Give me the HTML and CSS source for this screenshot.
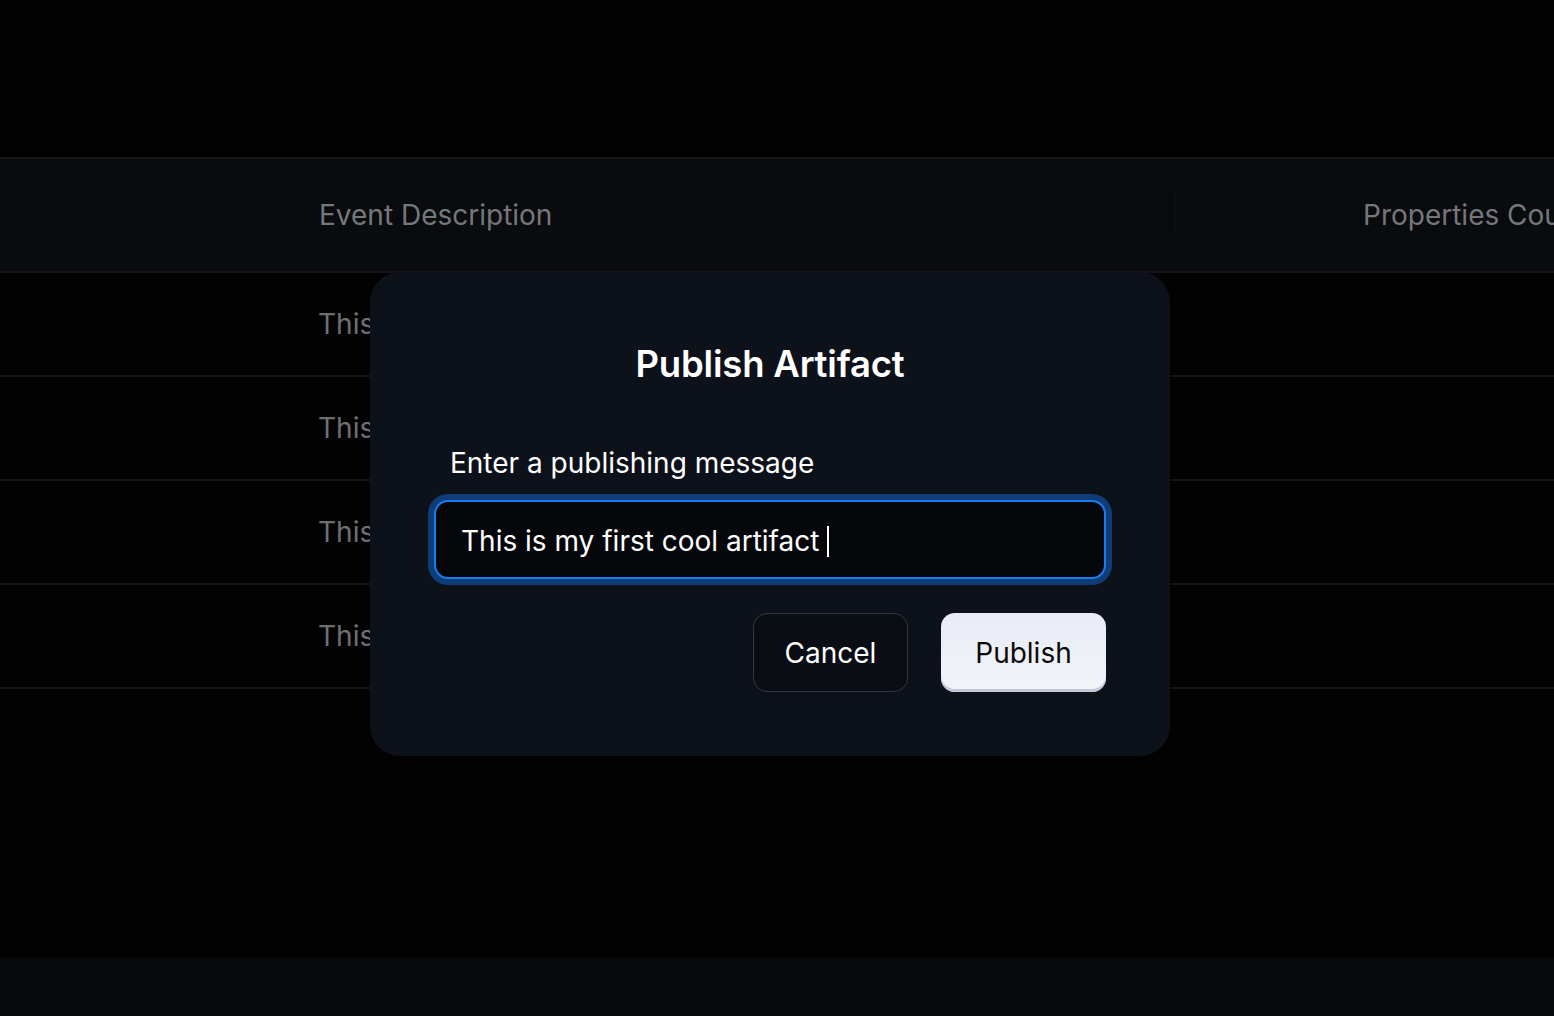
FILE: index.html
```html
<!DOCTYPE html>
<html lang="en">
<head>
<meta charset="utf-8">
<title>Publish Artifact</title>
<link rel="stylesheet" href="styles.css">
</head>
<body>
<div class="page">
  <div class="top-space"></div>
  <div class="table">
    <div class="row head">
      <div class="cell first"></div>
      <div class="cell desc sep">Event Description</div>
      <div class="cell props sep">Properties Count</div>
    </div>
    <div class="row">
      <div class="cell first"></div>
      <div class="cell desc">This event fires when a user signs up</div>
      <div class="cell props"></div>
    </div>
    <div class="row">
      <div class="cell first"></div>
      <div class="cell desc">This event fires when a page is viewed</div>
      <div class="cell props"></div>
    </div>
    <div class="row">
      <div class="cell first"></div>
      <div class="cell desc">This event fires when a button is clicked</div>
      <div class="cell props"></div>
    </div>
    <div class="row">
      <div class="cell first"></div>
      <div class="cell desc">This event fires when an order is placed</div>
      <div class="cell props"></div>
    </div>
  </div>
  <div class="filler"></div>
  <div class="footer"></div>
</div>

<div class="modal" role="dialog" aria-labelledby="modal-title">
  <h2 class="modal-title" id="modal-title">Publish Artifact</h2>
  <label class="field-label">Enter a publishing message</label>
  <div class="text-input"><span class="input-text">This is my first cool artifact</span><span class="caret"></span></div>
  <div class="actions">
    <button class="btn btn-cancel">Cancel</button>
    <button class="btn btn-primary">Publish</button>
  </div>
</div>
</body>
</html>
```

FILE: styles.css
```css
* { box-sizing: border-box; }

html, body {
  margin: 0;
  padding: 0;
  height: 100%;
}

body {
  background: #020203;
  font-family: Inter, "Noto Sans", "Liberation Sans", sans-serif;
  color: #ffffff;
  overflow: hidden;
}

.page {
  display: flex;
  flex-direction: column;
  height: 1016px;
}

.top-space {
  height: 157px;
  flex: none;
}

.table {
  border-top: 2px solid #141419;
  flex: none;
}

.row {
  display: grid;
  grid-template-columns: 258px 917px 1fr;
  height: 104px;
  border-bottom: 2px solid #141419;
  align-items: center;
}

.row.head {
  height: 114px;
  background: #0a0b0e;
}

.cell {
  font-size: 28px;
  color: #6f7075;
  white-space: nowrap;
  overflow: hidden;
}

.head .cell {
  color: #76777c;
}

.cell.desc {
  padding-left: 60px;
}

.cell.props {
  padding-left: 187px;
}

.cell.sep {
  border-left: 1px solid #0e0f13;
  height: 46px;
  display: flex;
  align-items: center;
}

.filler {
  flex: 1;
}

.footer {
  height: 58px;
  background: #08090c;
  flex: none;
}

.modal {
  position: absolute;
  left: 370px;
  top: 272px;
  width: 800px;
  height: 484px;
  background: #0d111a;
  border-radius: 30px;
  padding: 70px 64px 64px;
  display: flex;
  flex-direction: column;
}

.modal-title {
  margin: 0;
  text-align: center;
  font-size: 36.5px;
  line-height: 44px;
  font-weight: 600;
  color: #ffffff;
  letter-spacing: -0.2px;
}

.field-label {
  margin-top: 60px;
  padding-left: 16px;
  font-size: 28px;
  line-height: 34px;
  color: #ffffff;
}

.text-input {
  margin-top: 20px;
  height: 80px;
  border: 2px solid #1b7cf0;
  border-radius: 14px;
  background: #05070b;
  box-shadow: 0 0 0 6px #0f3d78;
  padding-left: 25px;
  padding-top: 3px;
  display: flex;
  align-items: center;
  font-size: 28px;
  color: #ffffff;
}

.caret {
  display: inline-block;
  width: 2px;
  height: 31px;
  background: #ffffff;
  margin-left: 8px;
}

.actions {
  margin-top: 34px;
  display: flex;
  justify-content: flex-end;
  gap: 33px;
}

.btn {
  height: 79px;
  border-radius: 14px;
  font-family: inherit;
  font-size: 28px;
  cursor: pointer;
}

.btn-cancel {
  width: 155px;
  background: #0a0d14;
  border: 1.5px solid #313744;
  color: #ffffff;
}

.btn-primary {
  width: 165px;
  background: linear-gradient(#e9ecf6, #f3f4f9);
  border: none;
  color: #0a0a0a;
  box-shadow: inset 0 -3px 0 #c3c9dc;
}
```
